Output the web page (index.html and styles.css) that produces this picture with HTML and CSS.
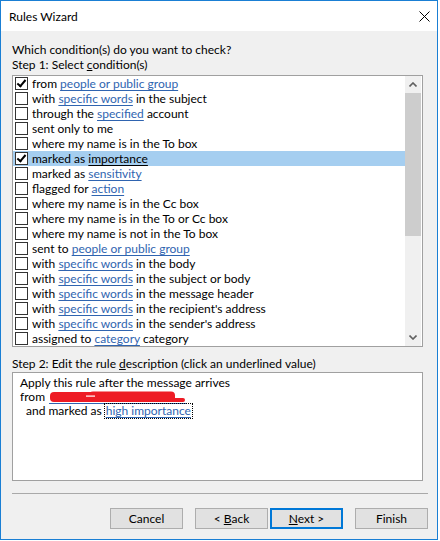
FILE: index.html
```html
<!DOCTYPE html>
<html>
<head>
<meta charset="utf-8">
<link rel="stylesheet" href="styles.css">
</head>
<body>
<div class="window">
  <div class="titlebar">
    <span class="title">Rules Wizard</span>
    <svg class="close" width="11" height="11" viewBox="0 0 11 11"><path d="M0.5 0.5L10.5 10.5M10.5 0.5L0.5 10.5" stroke="#000" stroke-width="1"/></svg>
  </div>
  <div class="content">
    <div class="line">Which condition(s) do you want to check?</div>
    <div class="line">Step 1: Select <u>c</u>ondition(s)</div>
    <div class="listbox">
      <div class="rows">
        <div class="row"><span class="cb checked"></span><span>from <a>people or public group</a></span></div>
        <div class="row"><span class="cb"></span><span>with <a>specific words</a> in the subject</span></div>
        <div class="row"><span class="cb"></span><span>through the <a>specified</a> account</span></div>
        <div class="row"><span class="cb"></span><span>sent only to me</span></div>
        <div class="row"><span class="cb"></span><span>where my name is in the To box</span></div>
        <div class="row selected"><span class="cb checked"></span><span>marked as <a class="sel">importance</a></span></div>
        <div class="row"><span class="cb"></span><span>marked as <a>sensitivity</a></span></div>
        <div class="row"><span class="cb"></span><span>flagged for <a>action</a></span></div>
        <div class="row"><span class="cb"></span><span>where my name is in the Cc box</span></div>
        <div class="row"><span class="cb"></span><span>where my name is in the To or Cc box</span></div>
        <div class="row"><span class="cb"></span><span>where my name is not in the To box</span></div>
        <div class="row"><span class="cb"></span><span>sent to <a>people or public group</a></span></div>
        <div class="row"><span class="cb"></span><span>with <a>specific words</a> in the body</span></div>
        <div class="row"><span class="cb"></span><span>with <a>specific words</a> in the subject or body</span></div>
        <div class="row"><span class="cb"></span><span>with <a>specific words</a> in the message header</span></div>
        <div class="row"><span class="cb"></span><span>with <a>specific words</a> in the recipient's address</span></div>
        <div class="row"><span class="cb"></span><span>with <a>specific words</a> in the sender's address</span></div>
        <div class="row"><span class="cb"></span><span>assigned to <a>category</a> category</span></div>
      </div>
      <div class="scrollbar">
        <div class="arrow"><svg width="8" height="5" viewBox="0 0 8 5"><path d="M0.5 4.5L4 1L7.5 4.5" fill="none" stroke="#606060" stroke-width="1.6"/></svg></div>
        <div class="track"><div class="thumb"></div></div>
        <div class="arrow"><svg width="8" height="5" viewBox="0 0 8 5"><path d="M0.5 0.5L4 4L7.5 0.5" fill="none" stroke="#606060" stroke-width="1.6"/></svg></div>
      </div>
    </div>
    <div class="line step2">Step 2: Edit the rule <u>d</u>escription (click an underlined value)</div>
    <div class="descbox">
      <div class="dline">Apply this rule after the message arrives</div>
      <div class="dline">from <span class="redact"><svg width="138" height="13" viewBox="0 0 138 13"><rect x="0" y="12" width="137" height="1" fill="#2f64b0"/><rect x="1" y="1" width="74" height="10" rx="4" fill="#ee1c25"/><rect x="40" y="0.5" width="86" height="10.5" rx="4" fill="#ee1c25"/><rect x="90" y="7" width="46" height="4" rx="2" fill="#ee1c25"/><rect x="37" y="4.5" width="9" height="1.2" fill="#ffffff"/></svg></span></div>
      <div class="dline indent">and marked as<span class="focus"><a>high importance</a></span></div>
    </div>
    <div class="separator"></div>
    <div class="buttons">
      <button class="btn">Cancel</button>
      <button class="btn back">&lt; <u>B</u>ack</button>
      <button class="btn next"><u>N</u>ext &gt;</button>
      <button class="btn finish">Finish</button>
    </div>
  </div>
</div>
</body>
</html>
```
FILE: styles.css
```css
body {
  margin: 0;
  background: #fff;
  font-family: Lato, "Noto Sans", sans-serif;
  font-size: 12px;
  color: #000;
}
.window {
  width: 438px;
  height: 540px;
  box-sizing: border-box;
  border: 1px solid #1a7fd4;
  background: #f0f0f0;
  display: flex;
  flex-direction: column;
}
.titlebar {
  height: 30px;
  flex-shrink: 0;
  background: #fff;
  display: flex;
  align-items: center;
  justify-content: space-between;
  padding: 0 7px 0 8px;
}
.title { font-size: 12px; }
.close { display: block; }
.content {
  flex: 1;
  padding: 11px 9px 10px 11px;
  display: flex;
  flex-direction: column;
}
.line {
  height: 15px;
  line-height: 15px;
  white-space: nowrap;
}
.listbox {
  margin-top: 3px;
  width: 411px;
  height: 272px;
  box-sizing: border-box;
  border: 1px solid #a0a0a0;
  background: #fff;
  display: flex;
  padding-right: 1px;
  flex-shrink: 0;
}
.rows {
  flex: 1;
  overflow: hidden;
}
.row {
  height: 15px;
  line-height: 15px;
  display: flex;
  align-items: center;
  padding-left: 2px;
  gap: 4px;
  white-space: nowrap;
}
.row.selected { background: #a5cef0; }
.cb {
  width: 13px;
  height: 13px;
  box-sizing: border-box;
  border: 1px solid #333;
  background: #fff;
  flex-shrink: 0;
  position: relative;
}
.cb.checked::after {
  content: "";
  position: absolute;
  left: 3px;
  top: 0px;
  width: 3px;
  height: 7px;
  border: solid #000;
  border-width: 0 2px 2px 0;
  transform: rotate(40deg);
}
a {
  color: #2f64b0;
  text-decoration: underline;
  text-underline-offset: 2px;
}
a.sel { color: #000; }
.scrollbar {
  width: 16px;
  background: #f0f0f0;
  display: flex;
  flex-direction: column;
}
.arrow {
  height: 17px;
  display: flex;
  align-items: center;
  justify-content: center;
  flex-shrink: 0;
}
.track { flex: 1; }
.thumb {
  height: 143px;
  background: #cdcdcd;
}
.step2 { margin-top: 9px; margin-bottom: 1px; }
.descbox {
  width: 411px;
  height: 109px;
  box-sizing: border-box;
  border: 1px solid #a0a0a0;
  background: #fff;
  padding: 3px 0 0 7px;
  flex-shrink: 0;
}
.dline {
  height: 14px;
  line-height: 14px;
  white-space: nowrap;
}
.redact {
  display: inline-block;
  width: 138px;
  height: 13px;
  vertical-align: -3px;
  margin-left: 1px;
}
.redact svg { display: block; }
.indent { padding-left: 6px; }
.focus {
  outline: 1px dotted #000;
  outline-offset: -1px;
  margin-left: 2px;
  padding: 0 2px 1px 2px;
}
.separator {
  margin-top: 12px;
  height: 1px;
  background: #a9a9a9;
  flex-shrink: 0;
}
.buttons {
  margin-top: 14px;
  display: flex;
  justify-content: flex-end;
}
.btn {
  width: 73px;
  height: 21px;
  box-sizing: border-box;
  border: 1px solid #adadad;
  background: #e1e1e1;
  font-family: Lato, "Noto Sans", sans-serif;
  font-size: 12px;
  color: #000;
  padding: 0;
  margin: 0;
}
.back { margin-left: 12px; }
.next { margin-left: 2px; border: 2px solid #0078d7; }
.finish { margin-left: 12px; }
```
